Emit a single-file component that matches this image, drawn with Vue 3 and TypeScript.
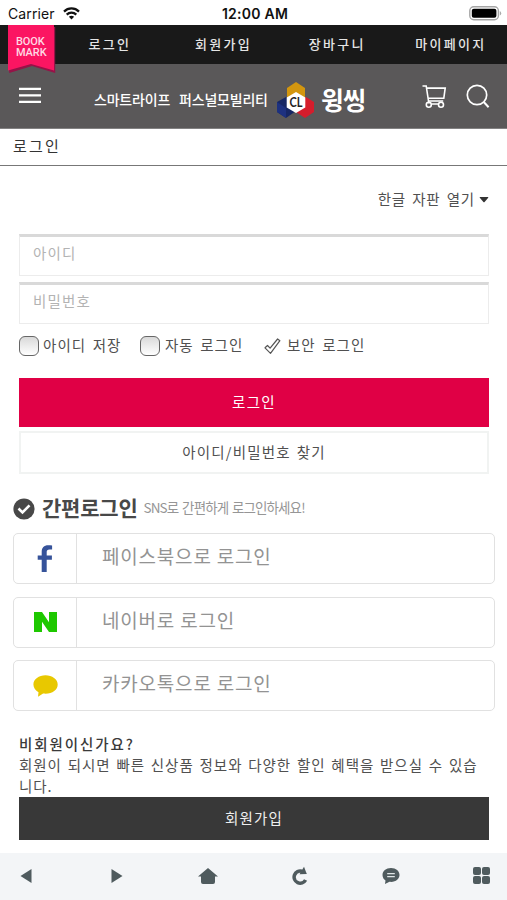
<script setup lang="ts">
interface Social { id: string; label: string }

const menu: string[] = ['로그인', '회원가입', '장바구니', '마이페이지']
const socials: Social[] = [
  { id: 'facebook', label: '페이스북으로 로그인' },
  { id: 'naver', label: '네이버로 로그인' },
  { id: 'kakao', label: '카카오톡으로 로그인' },
]
</script>

<template>
  <div class="screen">
    <div class="status">
      <div class="carrier">
        <span>Carrier</span>
        <svg width="17" height="13" viewBox="0 0 17 13" fill="none" stroke="#111" stroke-width="2.2">
          <path d="M1 4.6C5.2.4 11.8.4 16 4.6" />
          <path d="M3.7 7.6c2.7-2.7 6.9-2.7 9.6 0" />
          <path d="M8.5 12.4 5.9 9.8c1.5-1.3 3.7-1.3 5.2 0z" fill="#111" stroke="none" />
        </svg>
      </div>
      <span class="clock">12:00 AM</span>
      <svg class="battery" width="33" height="15" viewBox="0 0 33 15">
        <rect x=".8" y=".8" width="28.6" height="13" rx="4" fill="#fff" stroke="#a5a5a5" stroke-width="1.4" />
        <rect x="2.8" y="2.8" width="24.6" height="9" rx="2" fill="#000" />
        <path d="M30.8 5v4.6q1.4-.7 1.4-2.3T30.8 5" fill="#aaa" />
      </svg>
    </div>

    <nav class="top">
      <span v-for="item in menu" :key="item">{{ item }}</span>
      <div class="bookmark">
        <svg width="48" height="49" viewBox="0 0 48 49">
          <path d="M1.2 2h46v46L24 41 1.2 48z" fill="#961348" />
          <path d="M0 0h46v45.5L23 39 0 45.5z" fill="#fb1562" />
        </svg>
        <div class="ribbon"><b>BOOK</b><b>MARK</b></div>
      </div>
    </nav>

    <header class="brand">
      <svg class="burger" width="22" height="17" viewBox="0 0 22 17" stroke="#fff" stroke-width="2.2">
        <path d="M0 1.8h22M0 8.3h22M0 14.8h22" />
      </svg>
      <span class="slogan">스마트라이프 퍼스널모빌리티</span>
      <svg class="emblem" width="38" height="37" viewBox="0 0 38 37">
        <path d="M10 6 19 0l9 6v14H10z" fill="#d3960e" />
        <path d="M0 20l9-5 10 6v8L9 36 0 30z" fill="#162765" />
        <path d="M0 20l9 6v10l-9-6z" fill="#1d3180" />
        <path d="M19 21l10-6 8 5v10l-9 6-9-6z" fill="#d51d2c" />
        <path d="m19 10 9.3 5.5v10L19 31l-9.3-5.5v-10z" fill="#fff" />
        <text x="19" y="25.2" text-anchor="middle" font-family="Lato" font-size="13" font-weight="700" fill="#222" textLength="13" lengthAdjust="spacingAndGlyphs">CL</text>
      </svg>
      <span class="name">윙씽</span>
      <svg class="cart" width="25" height="25" viewBox="0 0 25 25" fill="none" stroke="#fff" stroke-width="1.6">
        <path d="M.5 2h3.700l2.700 17.500M4.400 4.100h18.800l-1.400 10.200H6.200M6.500 17h14.700M10 20h6" />
        <circle cx="6.8" cy="20.7" r="2.5" /><circle cx="19" cy="20.7" r="2.5" />
      </svg>
      <svg class="search" width="24" height="25" viewBox="0 0 24 25" fill="none" stroke="#fff" stroke-width="1.7">
        <circle cx="11" cy="11" r="9.7" /><path d="m17.8 18 4.8 5.2" stroke-width="2" />
      </svg>
    </header>

    <h1>로그인</h1>

    <main>
      <div class="keyboard"><span>한글 자판 열기</span><svg width="10" height="7" viewBox="0 0 10 7"><path d="M1.200 1h7.600q1 0 .4.800L5.600 5.900q-.6.600-1.200 0L.8 1.800Q.2 1 1.200 1" fill="#333" /></svg></div>

      <div class="field">아이디</div>
      <div class="field">비밀번호</div>

      <div class="options">
        <label><i class="box"></i><span>아이디 저장</span></label>
        <label class="auto"><i class="box"></i><span>자동 로그인</span></label>
        <label class="secure">
          <svg width="17" height="17" viewBox="0 0 17 17" fill="none" stroke="#555" stroke-width="1.2" stroke-linejoin="round"><path d="M1 9.800 3.500 7.500l2.600 2.700L13.600 1l2.300 1.700L6.500 15.300z" /></svg>
          <span>보안 로그인</span>
        </label>
      </div>

      <div class="login">로그인</div>
      <div class="find">아이디/비밀번호 찾기</div>

      <div class="easy">
        <svg width="22" height="22" viewBox="0 0 22 22"><circle cx="11" cy="11" r="10.6" fill="#484848" /><path d="m5.500 10.500 4 4 7-7.200" fill="none" stroke="#fff" stroke-width="2.6" /></svg>
        <h2>간편로그인</h2>
        <span class="hint">SNS로 간편하게 로그인하세요!</span>
      </div>

      <div class="socials">
        <div v-for="s in socials" :key="s.id" class="social">
          <div class="mark">
            <svg v-if="s.id === 'facebook'" width="16" height="27" viewBox="0 0 16 27"><path d="M4.700 27V14.700H.7v-4.200h4V7C4.700 2.500 7 .2 11.200.2c1.500 0 2.700.1 3.900.3v4h-2.600c-2.100 0-2.800.9-2.800 2.600v3.400h5.200v4.200H9.700V27z" fill="#36539a" /></svg>
            <svg v-else-if="s.id === 'naver'" width="23" height="20" viewBox="0 0 23 20"><path d="M0 0h8l7 10.200V0h8v20h-8L8 9.800V20H0z" fill="#1ec800" /></svg>
            <svg v-else width="25" height="22" viewBox="0 0 25 22"><path d="M12.500.3C5.900.3.4 4.300.4 9.500c0 3.300 2.100 6 5.100 7.700L5 21.700l5.100-3.200c8.200 1 14.600-3.100 14.600-9C24.700 4.300 19.100.3 12.500.3" fill="#e8c800" /></svg>
          </div>
          <span>{{ s.label }}</span>
        </div>
      </div>

      <section class="join">
        <h3>비회원이신가요?</h3>
        <p>회원이 되시면 빠른 신상품 정보와 다양한 할인 혜택을 받으실 수 있습<br />니다.</p>
        <div class="signup">회원가입</div>
      </section>
    </main>

    <footer>
      <svg width="12" height="16" viewBox="0 0 12 16"><path d="M11.500 1v14L.5 8z" /></svg>
      <svg width="12" height="16" viewBox="0 0 12 16"><path d="M.5 1v14l11-7z" /></svg>
      <svg width="20" height="18" viewBox="0 0 20 18"><path d="M10 1 0 9.500h3V15q0 2 2 2h10q2 0 2-2V9.500h3z" /></svg>
      <svg width="17" height="19" viewBox="0 0 17 19"><path d="M14.600 14A6.100 6.100 0 1 1 11 5.200" fill="none" stroke="#4f5b5e" stroke-width="3.600" /><path d="M13 .8 15.800 8 8.500 8.300z" /></svg>
      <svg width="18" height="18" viewBox="0 0 18 18"><path d="M9 1C4 1 .5 4 .5 8c0 2.700 1.500 4.500 3 5.500L3 17l4.500-2.200C13.500 15.500 17.500 12 17.500 8c0-4-3.500-7-8.500-7" /><path d="M5.200 6.700h7.600M5.200 9.700h7.600" stroke="#dfe5e6" stroke-width="1.200" /></svg>
      <svg width="17" height="17" viewBox="0 0 17 17"><rect width="8" height="8" rx="2" /><rect x="9" width="8" height="8" rx="2" /><rect y="9" width="8" height="8" rx="2" /><rect x="9" y="9" width="8" height="8" rx="2" /></svg>
    </footer>
  </div>
</template>

<style>
body { margin: 0; background: #fff; }
</style>

<style scoped>
* { box-sizing: border-box; }
h1, h2, h3, p { margin: 0; }
svg { display: block; flex: none; }
.screen { width: 507px; height: 900px; overflow: hidden; display: flex; flex-direction: column; background: #fff; color: #505050; font-family: "Noto Sans CJK KR", sans-serif; font-size: 14.5px; white-space: nowrap; }
.status { flex: none; height: 25px; padding: 2px 5px 0 8px; display: grid; grid-template-columns: 1fr auto 1fr; align-items: center; color: #111; font-family: Inter, sans-serif; }
.carrier { display: flex; align-items: center; gap: 8px; font-size: 14px; letter-spacing: .1px; }
.clock { font-size: 14px; font-weight: 600; letter-spacing: .25px; }
.battery { justify-self: end; }
.top { position: relative; flex: none; height: 39px; padding: 0 0 3px 53px; background: #191919; color: #e5e5e5; display: grid; grid-template-columns: repeat(4, 113.7px); place-items: center; font-size: 13px; font-weight: 500; letter-spacing: 2.3px; }
.bookmark { position: absolute; left: 8px; top: 0; width: 48px; height: 49px; }
.ribbon { position: absolute; left: 8px; top: 11px; display: grid; color: #ffd9e4; }
.ribbon b { height: 11px; font-family: Roboto, sans-serif; font-size: 11px; line-height: 11px; font-weight: 500; letter-spacing: -.1px; }
.brand { flex: none; height: 65px; background: #5a5859; border-bottom: 1px solid #828182; padding-left: 19px; display: flex; align-items: center; color: #fff; }
.burger { margin-bottom: 1px; }
.slogan { margin-left: 53px; padding-top: 6px; width: 175px; font-size: 14px; font-weight: 500; letter-spacing: -.2px; word-spacing: 6px; }
.emblem { margin: 8px 0 0 8px; }
.name { margin-left: 6px; padding-top: 5px; width: 45px; font-size: 25px; font-weight: 700; letter-spacing: -1px; line-height: 28px; }
.cart { margin-left: 56px; }
.search { margin-left: 19px; }
h1 { flex: none; height: 37px; padding: 0 13px 2px; border-bottom: 1px solid #777; font-size: 15px; line-height: 33px; font-weight: 400; letter-spacing: 2.2px; color: #333; }
main { flex: none; height: 687px; padding: 22px 18px 0 19px; }
.keyboard { height: 20px; margin-bottom: 25.5px; display: flex; justify-content: flex-end; align-items: center; gap: 4px; letter-spacing: .8px; word-spacing: 2.2px; }
.keyboard svg { margin-top: 2px; }
.field { height: 42px; margin-bottom: 6px; padding: 0 13px; border: 1px solid #ececec; border-top: 3px solid #d9d9d9; color: #b3b3b3; line-height: 32px; letter-spacing: 1.2px; }
.options { height: 47.5px; display: flex; align-items: flex-start; letter-spacing: 1.05px; word-spacing: 2.2px; }
.options label { display: flex; align-items: center; height: 33px; gap: 4px; }
.options label span { padding-bottom: 3px; }
.box { width: 20px; height: 20px; border: 1.5px solid #666; border-radius: 6px; background: linear-gradient(#d9d9d9, #fff); }
.options .auto { margin-left: 18.5px; gap: 5px; }
.options .secure { margin-left: 20.5px; gap: 6px; }
.login { height: 49px; margin-top: 1px; background: #e00045; color: #fff; text-align: center; line-height: 48px; letter-spacing: 1.3px; }
.find { height: 43px; margin-top: 4px; border: 2px solid #f1f3f2; text-align: center; line-height: 37px; letter-spacing: 1.2px; word-spacing: 1.5px; }
.easy { height: 59px; padding-top: 11px; margin-left: -6px; display: flex; align-items: center; }
.easy h2 { margin-left: 7px; font-size: 21px; line-height: 28px; font-weight: 700; padding-bottom: 5px; color: #484848; letter-spacing: -.2px; }
.easy .hint { margin-left: 6px; font-size: 13.5px; color: #969696; letter-spacing: -.9px; word-spacing: 1.7px; padding-bottom: 4px; }
.socials { margin: 0 -6px; display: grid; gap: 12.5px; }
.social { height: 51px; border: 1.5px solid #e1e1e1; border-radius: 5px; display: flex; color: #939393; font-size: 19px; letter-spacing: .8px; line-height: 44px; }
.mark { width: 63px; border-right: 1.5px solid #e1e1e1; display: grid; place-items: center; }
.social span { padding-left: 25px; }
.join { margin-top: 22px; }
.join h3 { font-size: 14.5px; line-height: 21px; font-weight: 500; letter-spacing: 1.9px; color: #3a3a3a; }
.join p { line-height: 21px; letter-spacing: .96px; word-spacing: 1.6px; margin-bottom: 1px; }
.signup { height: 43px; background: #383838; color: #eee; text-align: center; line-height: 41px; letter-spacing: 1.2px; }
footer { flex: none; height: 47px; padding: 0 15px 2px 16px; background: #f3f5f7; display: grid; grid-template-columns: repeat(6, 20px); place-items: center; justify-content: space-between; fill: #4f5b5e; }
</style>
